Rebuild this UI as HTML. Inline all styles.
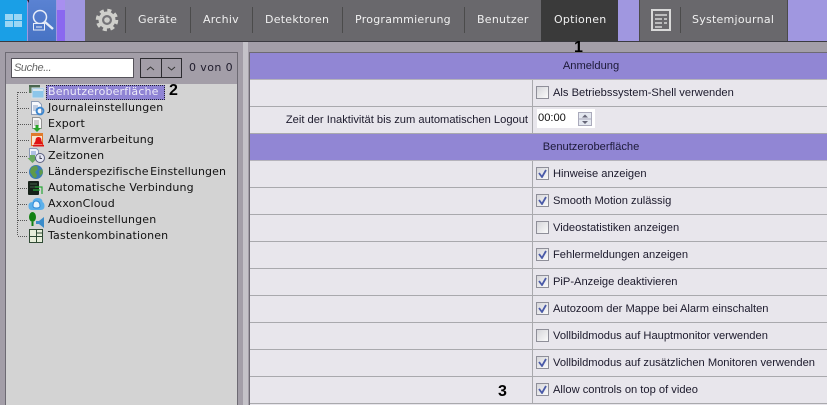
<!DOCTYPE html>
<html><head><meta charset="utf-8"><style>
html,body{margin:0;padding:0}
body{width:827px;height:405px;overflow:hidden;position:relative;background:#a39ea8;font-family:"Liberation Sans",sans-serif}
.a{position:absolute}
.nav{position:absolute;top:13px;font:11px/14px "DejaVu Sans",sans-serif;color:#f0f0f0;letter-spacing:.25px;white-space:nowrap;height:14px}
.sep{position:absolute;top:7px;width:1px;height:26px;background:#4b4b4b}
.t{position:absolute;left:48px;font:11px/14px "DejaVu Sans",sans-serif;color:#111;white-space:nowrap;letter-spacing:.15px}
.h{position:absolute;left:250px;width:577px;height:26px;background:#9186d4;font:11.15px/26px "Liberation Sans",sans-serif;color:#1c1a38;text-align:center;border-bottom:1px solid #b5b3bb;box-sizing:content-box}
.h span{position:absolute;left:341px;top:0;transform:translateX(-50%);white-space:nowrap}
.r{position:absolute;left:250px;width:577px;height:26px;background:#e8e6ec;border-bottom:1px solid #a9a9ad}
.r:before{content:"";position:absolute;left:282px;top:0;width:1px;height:27px;background:#a9a9ad}
.l{position:absolute;left:303px;top:6px;font:11.15px/14px "Liberation Sans",sans-serif;color:#1c1a2c;white-space:nowrap}
.c{position:absolute;left:286px;top:6px;width:11px;height:11px;border:1px solid #8f8f99;background:linear-gradient(135deg,#d6d6da,#fafafa)}
.c svg{position:absolute;left:1px;top:1px}
.k{position:absolute;font:bold 16px/16px "Liberation Sans",sans-serif;color:#000}
</style></head><body>
<div class="a" style="left:0;top:0;width:827px;height:41px;background:#a097e0"></div>
<div class="a" style="left:0;top:0;width:27px;height:41px;background:#1a9fe6"></div>
<div class="a" style="left:28px;top:0;width:28px;height:41px;background:linear-gradient(#5a82d2,#4773c4)"></div>
<div class="a" style="left:57px;top:0;width:8px;height:10px;background:#a88ff0"></div>
<div class="a" style="left:57px;top:10px;width:8px;height:31px;background:#8a68f0"></div>
<div class="a" style="left:85px;top:0;width:456px;height:41px;background:#69686c"></div>
<div class="a" style="left:541px;top:0;width:77px;height:41px;background:#3a3a3a"></div>
<div class="a" style="left:639px;top:0;width:149px;height:41px;background:#69686c;border-left:1px solid #4b4b4b;border-right:1px solid #4b4b4b;box-sizing:border-box"></div>
<div class="a" style="left:0;top:41px;width:827px;height:1px;background:#3b3a40"></div>

<svg class="a" style="left:0;top:0" width="130" height="41" viewBox="0 0 130 41">
<path d="M27 0h2v3z" fill="#223"/>
<g fill="#9ad6f4"><rect x="5" y="14" width="8" height="6"/><rect x="14" y="14" width="8" height="6"/><rect x="5" y="21" width="8" height="6"/><rect x="14" y="21" width="8" height="6"/></g>
<g fill="none" stroke="#e8eef8"><circle cx="40" cy="17" r="6.5" stroke-width="1.500"/><path d="M45 22l8 7" stroke-width="2.400"/><rect x="33.500" y="23.500" width="11" height="6.500" fill="#4f79c9" stroke-width="1"/><path d="M36 27h6" stroke-width="1"/></g>
<circle cx="107" cy="20" r="8.500" fill="#cfcfcb"/><circle cx="107" cy="20" r="9" fill="none" stroke="#cfcfcb" stroke-width="4.500" stroke-dasharray="3.800 3.270"/>
<circle cx="107" cy="20" r="5" fill="#757478"/><circle cx="107" cy="20" r="2.800" fill="#cfcfcb"/>
</svg>
<div class="sep" style="left:125px"></div><div class="sep" style="left:190px"></div><div class="sep" style="left:252px"></div><div class="sep" style="left:342px"></div><div class="sep" style="left:464px"></div><div class="sep" style="left:680px"></div>
<div class="nav" style="left:138px">Geräte</div>
<div class="nav" style="left:203px">Archiv</div>
<div class="nav" style="left:265px">Detektoren</div>
<div class="nav" style="left:355px">Programmierung</div>
<div class="nav" style="left:477px">Benutzer</div>
<div class="nav" style="left:554px">Optionen</div>
<div class="nav" style="left:692px">Systemjournal</div>
<svg class="a" style="left:651px;top:9px" width="21" height="23" viewBox="0 0 21 23"><rect x="1" y="1" width="18" height="20" fill="none" stroke="#d8d8d8" stroke-width="2"/><path d="M4 6h12M4 10h7M13 10h3M4 14h7M13 14h3M4 18h7" stroke="#d8d8d8" stroke-width="1.500"/></svg>

<div class="k" style="left:574px;top:40px">1</div>

<!-- left panel -->
<div class="a" style="left:5px;top:52px;width:233px;height:353px;border:1px solid #6d6a73;border-width:1px 1px 0 1px;box-sizing:border-box"></div>
<div class="a" style="left:6px;top:84px;width:231px;height:321px;background:#d3d3d3"></div>
<div class="a" style="left:11px;top:58px;width:123px;height:20px;background:#fff;border:1px solid #55525a;box-sizing:border-box;font:italic 11px/18px 'Liberation Sans',sans-serif;color:#666;padding-left:2px;letter-spacing:-.4px">Suche...</div>
<div class="a" style="left:140px;top:58px;width:22px;height:20px;border:1px solid #2c2b30;box-sizing:border-box"></div>
<div class="a" style="left:161px;top:58px;width:21px;height:20px;border:1px solid #2c2b30;box-sizing:border-box"></div>
<svg class="a" style="left:140px;top:58px" width="42" height="20"><path d="M7 12l3.500-3 3.500 3M28 9l3.500 3 3.500-3" fill="none" stroke="#333" stroke-width="1"/></svg>
<div class="a" style="left:189px;top:61px;font:11px/14px 'DejaVu Sans',sans-serif;color:#1f1c2c;letter-spacing:.4px;white-space:nowrap">0 von 0</div>

<!-- tree + icons, absolute coordinates -->
<svg class="a" style="left:0;top:0" width="60" height="250" viewBox="0 0 60 250">
<path d="M17.500 92V236M18 92.500h10M18 108.500h12M18 124.500h13M18 140.500h12M18 156.500h10M18 172.500h10M18 188.500h9M18 204.500h9M18 220.500h10M18 236.500h10" stroke="#555" stroke-dasharray="1 1" fill="none"/>
<!-- 1 window -->
<rect x="29" y="85" width="11" height="8" fill="#5f7f62"/><rect x="29" y="85" width="11" height="2" fill="#4a6650"/>
<rect x="32" y="88" width="12" height="10" fill="#8cc6ea" stroke="#d4dfe8"/><rect x="33" y="89" width="10" height="2" fill="#d8e6ee"/>
<!-- 2 doc gear -->
<path d="M31.500 101.500h7l3 3v10h-10z" fill="#f6f8fc" stroke="#8d9cb6"/><path d="M33 106h5M33 108h5M33 110h3" stroke="#8aa0c4"/>
<circle cx="40" cy="111" r="3.400" fill="none" stroke="#3e87cf" stroke-width="2"/>
<!-- 3 doc export -->
<path d="M32.500 117.500h7l2 2v9h-9z" fill="#f8f8f8" stroke="#949494"/><path d="M34 121h5M34 123h5M34 125h5" stroke="#a0a0a0"/><path d="M35.500 125h3v3h2.500l-4 4-4-4h2.500z" fill="#28a428"/>
<!-- 4 alarm -->
<rect x="31.500" y="133.500" width="11" height="12" fill="#f6e6d0" stroke="#e07a2a"/><rect x="31" y="133" width="12" height="3" fill="#e07a2a"/>
<path d="M38.500 137c2.500 0 3 2 3 4l2 3.500h-10l2-3.500c0-2 .5-4 3-4z" fill="#e01414"/><rect x="33" y="145" width="11" height="1.500" fill="#e01414"/>
<!-- 5 time zones -->
<path d="M29.500 148.500h7l2 2v7h-9z" fill="#f2f4fa" stroke="#8a99b5"/><path d="M31 152h5M31 154h5" stroke="#6c8ed0"/>
<path d="M30 155h5v3h2.500l-5 5-5-5h2.500z" fill="#68a860"/><circle cx="40" cy="158" r="4.500" fill="#e6e8f6" stroke="#5a6080"/><path d="M40 155.500v3h2" stroke="#445" fill="none"/>
<!-- 6 globe -->
<circle cx="36" cy="172" r="7" fill="#3a7cb8"/><path d="M31 168q3-3 6-2l1 3-3 3 2 3-1 3q-3 0-4-3l-2-3zM39 171l3-2 1 4-3 3z" fill="#5f9a4a"/>
<!-- 7 server -->
<rect x="28" y="181" width="11" height="14" rx="1" fill="#152018"/><path d="M30 184h7M30 187h7" stroke="#3f5f46"/><path d="M35 187h7v7M33 190h7" fill="none" stroke="#28a838" stroke-width="1.200"/>
<!-- 8 cloud -->
<path d="M28.500 206q0-4 4-4 1-4 5-4 5 0 5 4 2 1 2 4 0 4-4 4h-9q-3 0-3-4z" fill="#5cb0ea"/><path d="M33 206q0-5 3-5 4 0 4 5 0 2-3.500 2t-3.500-2z" fill="#e6f3fc" stroke="#2d8ad8"/>
<!-- 9 audio -->
<ellipse cx="32.500" cy="217" rx="3.500" ry="5" fill="#128012"/><path d="M31.500 222h2v4h-2z" fill="#128012"/><path d="M36 221h3l5-4v11l-5-4h-3z" fill="#3a8cc9"/>
<!-- 10 keys -->
<rect x="29" y="229" width="14" height="14" fill="#2f4a34"/><g fill="#e6eeda"><rect x="30" y="230" width="6" height="6"/><rect x="37" y="230" width="5" height="2.500"/><rect x="37" y="233.500" width="5" height="2.500"/><rect x="30" y="237" width="6" height="5"/><rect x="37" y="237" width="5" height="5"/></g>
</svg>

<div class="a" style="left:46px;top:85px;width:119px;height:15px;background:#8f84d4;border:1px dotted #223;box-sizing:border-box"></div>
<div class="t" style="top:85px;color:#eceaf8">Benutzeroberfläche</div>
<div class="k" style="left:169px;top:83px">2</div>
<div class="t" style="top:101px">Journaleinstellungen</div>
<div class="t" style="top:117px">Export</div>
<div class="t" style="top:133px">Alarmverarbeitung</div>
<div class="t" style="top:149px">Zeitzonen</div>
<div class="t" style="top:165px;letter-spacing:.1px;word-spacing:-2px">Länderspezifische Einstellungen</div>
<div class="t" style="top:181px">Automatische Verbindung</div>
<div class="t" style="top:197px">AxxonCloud</div>
<div class="t" style="top:213px">Audioeinstellungen</div>
<div class="t" style="top:229px">Tastenkombinationen</div>

<!-- splitter -->
<div class="a" style="left:243px;top:42px;width:5px;height:363px;background:#c4c2c8"></div>
<div class="a" style="left:249px;top:52px;width:578px;height:1px;background:#6d6a73"></div>
<div class="a" style="left:249px;top:52px;width:1px;height:353px;background:#6d6a73"></div>

<!-- right -->
<div class="h" style="top:53px"><span>Anmeldung</span></div>
<div class="r" style="top:80px"><div class="c"></div><div class="l">Als Betriebssystem-Shell verwenden</div></div>
<div class="r" style="top:107px"><div class="a" style="right:299px;top:6px;font:11.15px/14px 'Liberation Sans',sans-serif;color:#1c1a2c;white-space:nowrap">Zeit der Inaktivität bis zum automatischen Logout</div>
<div class="a" style="left:287px;top:2px;width:58px;height:19px;background:#fff;font:11.15px/18px 'Liberation Sans',sans-serif;color:#111;padding-left:1px;box-sizing:border-box">00:00</div>
<svg class="a" style="left:328px;top:5px" width="14" height="14"><rect x=".5" y=".5" width="13" height="13" fill="#e4e8f0" stroke="#aab"/><path d="M.5 7h13" stroke="#aab"/><path d="M4 5.500l3-3 3 3zM4 9l3 3 3-3z" fill="#667"/></svg></div>
<div class="h" style="top:134px"><span>Benutzeroberfläche</span></div>
<div class="r" style="top:161px"><div class="c"><svg width="9" height="9"><path d="M1 4l3 4 4-7" fill="none" stroke="#4a5aa8" stroke-width="1.800"/></svg></div><div class="l">Hinweise anzeigen</div></div>
<div class="r" style="top:188px"><div class="c"><svg width="9" height="9"><path d="M1 4l3 4 4-7" fill="none" stroke="#4a5aa8" stroke-width="1.800"/></svg></div><div class="l">Smooth Motion zulässig</div></div>
<div class="r" style="top:215px"><div class="c"></div><div class="l">Videostatistiken anzeigen</div></div>
<div class="r" style="top:242px"><div class="c"><svg width="9" height="9"><path d="M1 4l3 4 4-7" fill="none" stroke="#4a5aa8" stroke-width="1.800"/></svg></div><div class="l">Fehlermeldungen anzeigen</div></div>
<div class="r" style="top:269px"><div class="c"><svg width="9" height="9"><path d="M1 4l3 4 4-7" fill="none" stroke="#4a5aa8" stroke-width="1.800"/></svg></div><div class="l">PiP-Anzeige deaktivieren</div></div>
<div class="r" style="top:296px"><div class="c"><svg width="9" height="9"><path d="M1 4l3 4 4-7" fill="none" stroke="#4a5aa8" stroke-width="1.800"/></svg></div><div class="l">Autozoom der Mappe bei Alarm einschalten</div></div>
<div class="r" style="top:323px"><div class="c"></div><div class="l">Vollbildmodus auf Hauptmonitor verwenden</div></div>
<div class="r" style="top:350px"><div class="c"><svg width="9" height="9"><path d="M1 4l3 4 4-7" fill="none" stroke="#4a5aa8" stroke-width="1.800"/></svg></div><div class="l">Vollbildmodus auf zusätzlichen Monitoren verwenden</div></div>
<div class="r" style="top:377px"><div class="c"><svg width="9" height="9"><path d="M1 4l3 4 4-7" fill="none" stroke="#4a5aa8" stroke-width="1.800"/></svg></div><div class="l">Allow controls on top of video</div></div>
<div class="a" style="left:250px;top:404px;width:577px;height:1px;background:#e8e6ec"></div>
<div class="k" style="left:498px;top:384px">3</div>
</body></html>
